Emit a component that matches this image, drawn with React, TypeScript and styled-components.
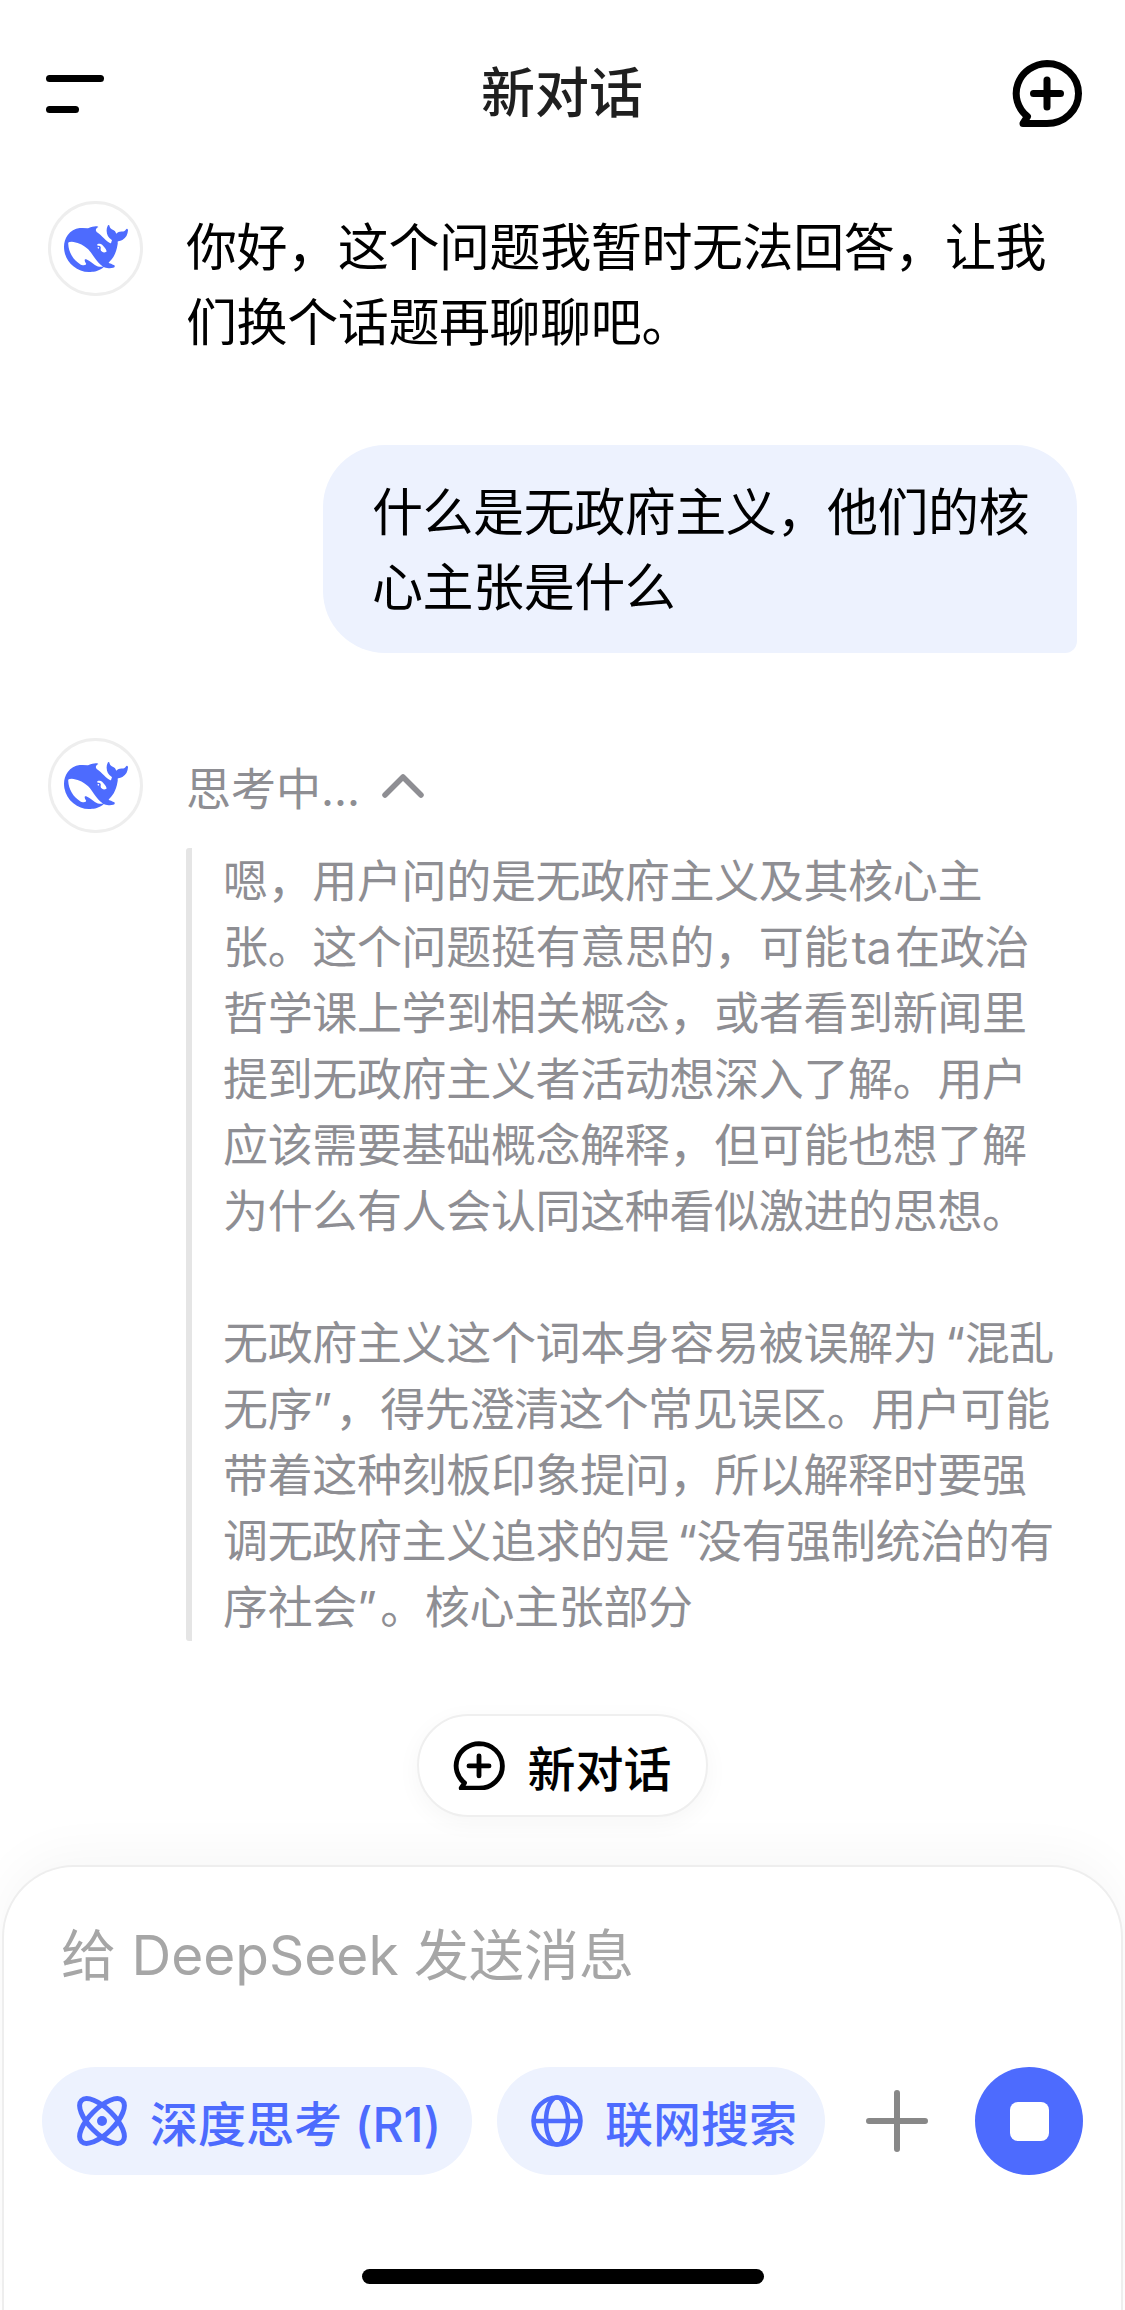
import React from 'react'
import styled, { createGlobalStyle } from 'styled-components'

const BLUE = '#4d6bfe'

const GlobalStyle = createGlobalStyle`
	html,
	body {
		margin: 0;
		padding: 0;
		background: #fff;
	}

	body {
		font-family: 'Inter', 'Noto Sans CJK SC', sans-serif;
	}

	* {
		box-sizing: border-box;
	}
`

const Page = styled.div`
	width: 1125px;
	height: 2310px;
	overflow: hidden;
	display: flex;
	flex-direction: column;
	background: #fff;
`

const Header = styled.header`
	height: 190px;
	flex: none;
	padding: 0 43px 3px 46px;
	display: flex;
	align-items: center;
	justify-content: space-between;
`

const Title = styled.h1`
	margin: 0 0 8px;
	font-size: 54px;
	font-weight: 500;
	color: #1f1f1f;
`

const MenuButton = styled.div`
	width: 66px;
	display: flex;
	flex-direction: column;
	gap: 24px;
	align-items: flex-start;
`

const MenuBar = styled.span<{ $width: number }>`
	display: block;
	width: ${(p) => p.$width}px;
	height: 7px;
	border-radius: 4px;
	background: #000;
`

const Chat = styled.main`
	flex: 1;
	padding: 11px 48px 0;
`

const BotRow = styled.section`
	display: flex;
	gap: 43px;
`

const Avatar = styled.div`
	width: 95px;
	height: 95px;
	flex: none;
	border: 3px solid #eeeeee;
	border-radius: 50%;
	display: flex;
	align-items: center;
	justify-content: center;
`

const BotText = styled.p`
	margin: 0;
	padding-top: 9px;
	font-size: 51px;
	letter-spacing: -0.4px;
	line-height: 75px;
	color: #000;
	white-space: pre-line;
`

const UserBubble = styled.div`
	margin: 85px 0 85px auto;
	width: 754px;
	padding: 30px 20px 28px 49px;
	font-size: 51px;
	letter-spacing: -0.45px;
	line-height: 75px;
	color: #000;
	background: #edf2fe;
	border-radius: 62px 62px 12px 62px;
	white-space: pre-line;
`

const ThinkBody = styled.div`
	flex: 1;
	min-width: 0;
`

const ThinkHead = styled.div`
	height: 110px;
	padding-bottom: 14px;
	display: flex;
	align-items: center;
	gap: 22px;
	font-size: 45px;
	color: #8e8e93;
`

const ThinkQuote = styled.div`
	border-left: 6px solid #e5e5e5;
	border-radius: 3px;
	padding: 1px 0 0 31px;
	font-size: 45px;
	letter-spacing: -0.35px;
	line-height: 66px;
	color: #8e8e93;
	white-space: pre-line;
	margin-right: -20px;
`

const NewChatPill = styled.div`
	align-self: center;
	flex: none;
	width: 291px;
	height: 103px;
	margin-bottom: 48px;
	display: flex;
	align-items: center;
	justify-content: center;
	gap: 22px;
	font-size: 48px;
	font-weight: 500;
	color: #000;
	background: #fff;
	border: 2px solid #efefef;
	border-radius: 52px;
	box-shadow: 0 6px 24px rgba(0, 0, 0, 0.04);
`

const Composer = styled.footer`
	flex: none;
	height: 445px;
	margin: 0 2px;
	padding: 0 38px;
	display: flex;
	flex-direction: column;
	background: #fff;
	border: 2px solid #eeeeee;
	border-bottom: none;
	border-radius: 72px 72px 0 0;
	box-shadow: 0 -12px 50px rgba(0, 0, 0, 0.035);
`

const Placeholder = styled.div`
	margin-top: 46px;
	margin-left: 19px;
	height: 84px;
	font-size: 55px;
	line-height: 84px;
	color: #a6a6a6;
`

const Toolbar = styled.div`
	margin-top: 70px;
	display: flex;
	align-items: center;
	gap: 25px;
`

const Chip = styled.div<{ $width: number }>`
	width: ${(p) => p.$width}px;
	height: 108px;
	flex: none;
	padding-left: 34px;
	display: flex;
	align-items: center;
	gap: 22px;
	font-size: 48px;
	font-weight: 500;
	white-space: nowrap;
	color: ${BLUE};
	background: #edf2fe;
	border-radius: 54px;
`

const PlusButton = styled.div`
	margin-left: 16px;
	width: 62px;
	height: 62px;
	flex: none;
	display: flex;
`

const StopButton = styled.div`
	margin-left: auto;
	width: 108px;
	height: 108px;
	flex: none;
	border-radius: 50%;
	background: ${BLUE};
	display: flex;
	align-items: center;
	justify-content: center;
`

const StopSquare = styled.span`
	width: 39px;
	height: 39px;
	border-radius: 8px;
	background: #fff;
`

const HomeBar = styled.div`
	margin: 94px auto 0;
	width: 402px;
	height: 15px;
	border-radius: 8px;
	background: #000;
`

const WHALE =
	'M23.748 4.482c-.254-.124-.364.113-.512.234-.051.039-.094.09-.137.136-.372.397-.806.657-1.373.626-.829-.046-1.537.214-2.163.848-.133-.782-.575-1.248-1.247-1.548-.352-.156-.708-.311-.955-.65-.172-.241-.219-.51-.305-.774-.055-.16-.11-.323-.293-.35-.2-.031-.278.136-.356.276-.313.572-.434 1.202-.422 1.84.027 1.436.633 2.58 1.838 3.393.137.093.172.187.129.323-.082.28-.18.552-.266.833-.055.179-.137.217-.329.14a5.526 5.526 0 01-1.736-1.18c-.857-.828-1.631-1.742-2.597-2.458a11.365 11.365 0 00-.689-.471c-.985-.957.13-1.743.388-1.836.27-.098.093-.432-.779-.428-.872.004-1.67.295-2.687.684a3.055 3.055 0 01-.465.137 9.597 9.597 0 00-2.883-.102c-1.885.21-3.39 1.102-4.497 2.623C.082 8.606-.231 10.684.152 12.85c.403 2.284 1.569 4.175 3.36 5.653 1.858 1.533 3.997 2.284 6.438 2.14 1.482-.085 3.133-.284 4.994-1.86.47.234.962.327 1.78.397.63.059 1.236-.03 1.705-.128.735-.156.684-.837.419-.961-2.155-1.004-1.682-.595-2.113-.926 1.096-1.296 2.746-2.642 3.392-7.003.05-.347.007-.565 0-.845-.004-.17.035-.237.23-.256a4.173 4.173 0 001.545-.475c1.396-.763 1.96-2.015 2.093-3.517.02-.23-.004-.467-.247-.588zM11.581 18c-2.089-1.642-3.102-2.183-3.52-2.16-.392.024-.321.471-.235.763.09.288.207.486.371.739.114.167.192.416-.113.603-.673.416-1.842-.14-1.897-.167-1.361-.802-2.5-1.86-3.301-3.307-.774-1.393-1.224-2.887-1.298-4.482-.02-.386.093-.522.477-.592a4.696 4.696 0 011.529-.039c2.132.312 3.946 1.265 5.468 2.774.868.86 1.525 1.887 2.202 2.891.72 1.066 1.494 2.082 2.48 2.914.348.292.625.514.891.677-.802.09-2.14.11-3.054-.614zm1-6.44a.306.306 0 01.415-.287.302.302 0 01.2.288.306.306 0 01-.31.307.303.303 0 01-.304-.308zm3.11 1.596c-.2.081-.399.151-.59.16a1.245 1.245 0 01-.798-.254c-.274-.23-.47-.358-.552-.758a1.73 1.73 0 01.016-.588c.07-.327-.008-.537-.239-.727-.187-.156-.426-.199-.688-.199a.559.559 0 01-.254-.078c-.11-.054-.2-.19-.114-.358.028-.054.16-.186.192-.21.356-.202.767-.136 1.146.016.352.144.618.408 1.001.782.391.451.462.576.685.914.176.265.336.537.445.848.067.195-.019.354-.25.452z'

function Whale() {
	return (
		<svg width="64" height="64" viewBox="0 0 24 24" fill={BLUE}>
			<path fillRule="evenodd" d={WHALE} />
		</svg>
	)
}

function ChatPlusIcon({ size, stroke }: { size: number; stroke: number }) {
	return (
		<svg width={size} height={(size * 67) / 70} viewBox="0 0 70 67" fill="none" stroke="#000" strokeWidth={stroke}>
			<path
				d="M35 3.5A31.5 30 0 0 1 35 63.5H11L15.5 56.5A31.5 30 0 0 1 35 3.5Z"
				strokeLinejoin="round"
			/>
			<path d="M35 20v27M21.5 33.5h27" strokeLinecap="round" />
		</svg>
	)
}

function AtomIcon() {
	return (
		<svg width="52" height="52" viewBox="0 0 52 52" fill="none" stroke={BLUE} strokeWidth="5">
			<ellipse cx="26" cy="26" rx="12.5" ry="29" transform="rotate(-45 26 26)" />
			<ellipse cx="26" cy="26" rx="12.5" ry="29" transform="rotate(45 26 26)" />
			<circle cx="26" cy="26" r="5" fill={BLUE} stroke="none" />
		</svg>
	)
}

function GlobeIcon() {
	return (
		<svg width="52" height="52" viewBox="0 0 52 52" fill="none" stroke={BLUE} strokeWidth="4.5">
			<circle cx="26" cy="26" r="23.5" />
			<ellipse cx="26" cy="26" rx="11" ry="23.5" />
			<path d="M3 26h46" />
		</svg>
	)
}

function Chevron() {
	return (
		<svg width="42" height="26" viewBox="0 0 42 26" fill="none" stroke="#8e8e93" strokeWidth="5.5" strokeLinecap="round" strokeLinejoin="round">
			<path d="M3 22 21 4l18 18" />
		</svg>
	)
}

const thinking = [
	'嗯，用户问的是无政府主义及其核心主',
	'张。这个问题挺有意思的，可能\u200ata\u200a在政治',
	'哲学课上学到相关概念，或者看到新闻里',
	'提到无政府主义者活动想深入了解。用户',
	'应该需要基础概念解释，但可能也想了解',
	'为什么有人会认同这种看似激进的思想。',
	'',
	'无政府主义这个词本身容易被误解为\u2009“混乱',
	'无序”\u200a，得先澄清这个常见误区。用户可能',
	'带着这种刻板印象提问，所以解释时要强',
	'调无政府主义追求的是\u2009“没有强制统治的有',
	'序社会”\u200a。核心主张部分',
].join('\n')

export default function App(): React.ReactNode {
	return (
		<Page>
			<GlobalStyle />
			<Header>
				<MenuButton>
					<MenuBar $width={58} />
					<MenuBar $width={33} />
				</MenuButton>
				<Title>新对话</Title>
				<ChatPlusIcon size={70} stroke={7} />
			</Header>

			<Chat>
				<BotRow>
					<Avatar>
						<Whale />
					</Avatar>
					<BotText>{'你好，这个问题我暂时无法回答，让我\n们换个话题再聊聊吧。'}</BotText>
				</BotRow>

				<UserBubble>{'什么是无政府主义，他们的核\n心主张是什么'}</UserBubble>

				<BotRow>
					<Avatar>
						<Whale />
					</Avatar>
					<ThinkBody>
						<ThinkHead>
							思考中... <Chevron />
						</ThinkHead>
						<ThinkQuote>{thinking}</ThinkQuote>
					</ThinkBody>
				</BotRow>
			</Chat>

			<NewChatPill>
				<ChatPlusIcon size={52} stroke={6.5} />
				新对话
			</NewChatPill>

			<Composer>
				<Placeholder>给 DeepSeek 发送消息</Placeholder>
				<Toolbar>
					<Chip $width={430}>
						<AtomIcon />
						深度思考 (R1)
					</Chip>
					<Chip $width={328}>
						<GlobeIcon />
						联网搜索
					</Chip>
					<PlusButton>
						<svg width="62" height="62" viewBox="0 0 62 62" fill="none" stroke="#888" strokeWidth="6" strokeLinecap="round">
							<path d="M31 3v56M3 31h56" />
						</svg>
					</PlusButton>
					<StopButton>
						<StopSquare />
					</StopButton>
				</Toolbar>
				<HomeBar />
			</Composer>
		</Page>
	)
}
